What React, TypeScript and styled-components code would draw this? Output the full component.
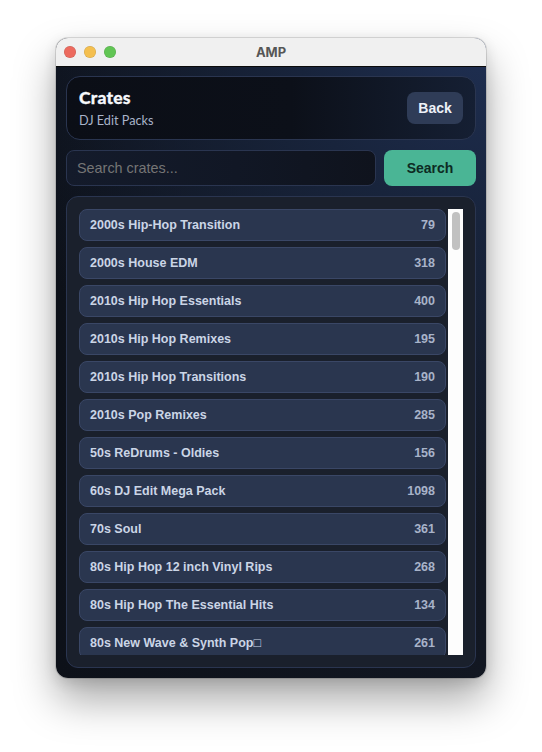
import React from "react";
import styled, { createGlobalStyle } from "styled-components";

const GlobalStyle = createGlobalStyle`
  html, body {
    margin: 0;
    padding: 0;
    background: #fff;
    overflow: hidden;
  }
  * {
    box-sizing: border-box;
  }
`;

const Page = styled.div`
  width: 542px;
  height: 752px;
  padding: 38px 56px 0;
`;

const Window = styled.div`
  width: 430px;
  height: 640px;
  display: flex;
  flex-direction: column;
  border-radius: 12px;
  overflow: hidden;
  background: radial-gradient(circle at 100% 0%, #1f2f52 0%, #18243c 24%, rgba(16, 21, 32, 0) 64%),
    linear-gradient(90deg, #0d1119, #121722);
  box-shadow: 0 0 0 1px rgba(0, 0, 0, 0.12), 0 22px 42px rgba(0, 0, 0, 0.34), 0 4px 14px rgba(0, 0, 0, 0.12);
`;

const TitleBar = styled.div`
  position: relative;
  height: 29px;
  flex: none;
  display: flex;
  align-items: center;
  justify-content: center;
  background: #f0f0f0;
  border-bottom: 1px solid #0b0b0b;
  font: bold 13px "Inter", "Liberation Sans", sans-serif;
  color: #565656;
`;

const Lights = styled.div`
  position: absolute;
  left: 8px;
  top: 8px;
  display: flex;
  gap: 8px;
`;

const Light = styled.span<{ $color: string }>`
  width: 12px;
  height: 12px;
  border-radius: 50%;
  background: ${(p) => p.$color};
  box-shadow: inset 0 0 0 0.5px rgba(0, 0, 0, 0.15);
`;

const Content = styled.div`
  flex: 1;
  min-height: 0;
  display: flex;
  flex-direction: column;
  gap: 10px;
  padding: 9px 10px 10px;
`;

const Header = styled.div`
  height: 64px;
  flex: none;
  display: flex;
  align-items: center;
  justify-content: space-between;
  padding: 0 12px;
  border: 1px solid #2a3550;
  border-radius: 14px;
  background: linear-gradient(90deg, #0b0e16 0%, #0c1019 55%, #151f33 100%);
`;

const Title = styled.div`
  font: 900 17.5px "Lato", "Noto Sans", sans-serif;
  letter-spacing: 0.2px;
  -webkit-text-stroke: 0.3px #f5f7fb;
  color: #f5f7fb;
  line-height: 20px;
`;

const Subtitle = styled.div`
  font: 400 12.7px "Lato", "Noto Sans", sans-serif;
  color: #a8b3c9;
  line-height: 16px;
  margin-top: 4px;
`;

const BackButton = styled.button`
  width: 56px;
  height: 32px;
  border: 0;
  padding: 0;
  border-radius: 8px;
  background: #2f3c57;
  color: #eef1f8;
  font: bold 14px "Liberation Sans", sans-serif;
`;

const SearchRow = styled.div`
  flex: none;
  display: flex;
  gap: 8px;
  height: 36px;
`;

const SearchInput = styled.input`
  flex: 1;
  min-width: 0;
  height: 36px;
  padding: 0 10px;
  border: 1px solid #2a3550;
  border-radius: 8px;
  outline: none;
  background: linear-gradient(90deg, #141b2b 0%, #111725 55%, #0f131d 100%);
  color: #e8ebf2;
  font: 14.4px "Liberation Sans", sans-serif;
  &::placeholder {
    color: #757575;
    opacity: 1;
  }
`;

const SearchButton = styled.button`
  width: 92px;
  flex: none;
  border: 0;
  padding: 0;
  border-radius: 8px;
  background: #4ab595;
  color: #0d2b23;
  font: bold 14px "Liberation Sans", sans-serif;
`;

const Panel = styled.div`
  flex: 1;
  min-height: 0;
  padding: 12px;
  border: 1px solid #2a3550;
  border-radius: 12px;
  background: #1a202c;
  display: flex;
  gap: 2px;
`;

const List = styled.div`
  flex: 1;
  min-width: 0;
  min-height: 0;
  display: flex;
  flex-direction: column;
  gap: 6px;
  overflow: hidden;
`;

const ScrollTrack = styled.div`
  width: 15px;
  flex: none;
  padding: 3px 3px 0 4px;
  background: #fdfdfd;
`;

const ScrollThumb = styled.div`
  height: 38px;
  border-radius: 4px;
  background: #c1c1c1;
`;

const Row = styled.div`
  height: 32px;
  flex: none;
  display: flex;
  align-items: center;
  justify-content: space-between;
  padding: 0 10px;
  border: 1px solid #3a4766;
  border-radius: 8px;
  background: #2a364f;
  font: bold 12.5px "Liberation Sans", sans-serif;
`;

const RowName = styled.span`
  color: #cbd5e6;
`;

const RowCount = styled.span`
  color: #a8b3c9;
`;

const crates = [
  { name: "2000s Hip-Hop Transition", count: 79 },
  { name: "2000s House EDM", count: 318 },
  { name: "2010s Hip Hop Essentials", count: 400 },
  { name: "2010s Hip Hop Remixes", count: 195 },
  { name: "2010s Hip Hop Transitions", count: 190 },
  { name: "2010s Pop Remixes", count: 285 },
  { name: "50s ReDrums - Oldies", count: 156 },
  { name: "60s DJ Edit Mega Pack", count: 1098 },
  { name: "70s Soul", count: 361 },
  { name: "80s Hip Hop 12 inch Vinyl Rips", count: 268 },
  { name: "80s Hip Hop The Essential Hits", count: 134 },
  { name: "80s New Wave & Synth Pop\u25a1", count: 261 },
];

const App: React.FC = () => {
  return (
    <Page>
      <GlobalStyle />
      <Window>
        <TitleBar>
          <Lights>
            <Light $color="#ec6a5e" />
            <Light $color="#f4bf4f" />
            <Light $color="#61c554" />
          </Lights>
          AMP
        </TitleBar>
        <Content>
          <Header>
            <div>
              <Title>Crates</Title>
              <Subtitle>DJ Edit Packs</Subtitle>
            </div>
            <BackButton>Back</BackButton>
          </Header>
          <SearchRow>
            <SearchInput placeholder="Search crates..." />
            <SearchButton>Search</SearchButton>
          </SearchRow>
          <Panel>
            <List>
              {crates.map((crate) => (
                <Row key={crate.name}>
                  <RowName>{crate.name}</RowName>
                  <RowCount>{crate.count}</RowCount>
                </Row>
              ))}
            </List>
            <ScrollTrack>
              <ScrollThumb />
            </ScrollTrack>
          </Panel>
        </Content>
      </Window>
    </Page>
  );
};

export default App;
